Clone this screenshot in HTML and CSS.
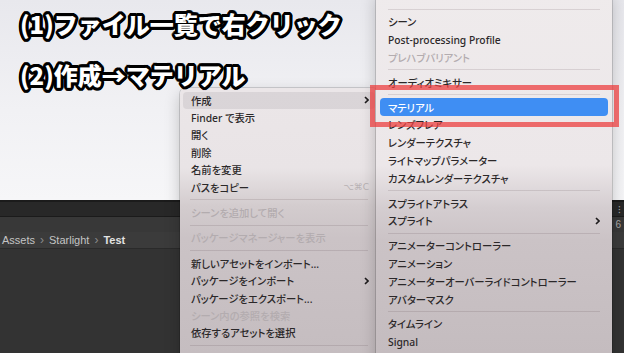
FILE: index.html
```html
<!DOCTYPE html>
<html lang="ja">
<head>
    <meta charset="UTF-8">
    <meta name="viewport" content="width=device-width, initial-scale=1.0">
    <title>作成 → マテリアル</title>
    <link rel="stylesheet" href="styles.css">
</head>
<body>

    <div class="screen">
        <section class="desk">
            <p class="note">(1)ファイル一覧で右クリック</p>
            <p class="note">(2)作成→マテリアル</p>
        </section>

        <section class="editor">
            <div class="toolbar"><span class="more">⁝</span></div>
            <div class="subbar"><span class="count">6</span></div>
            <div class="crumbs">
                <span>Assets</span><span class="crumb-sep">›</span>
                <span>Starlight</span><span class="crumb-sep">›</span>
                <b>Test</b>
            </div>
            <div class="files"></div>
        </section>

        <!-- 右クリックメニュー -->
        <div class="menu menu-main">
            <div class="item open">作成<svg class="arrow" viewBox="0 0 5 8"><path d="M1 1 L4 4 L1 7"/></svg></div>
            <div class="item">Finder で表示</div>
            <div class="item">開く</div>
            <div class="item">削除</div>
            <div class="item">名前を変更</div>
            <div class="item">パスをコピー<span class="keys">⌥⌘C</span></div>
            <div class="rule"></div>
            <div class="item off">シーンを追加して開く</div>
            <div class="rule"></div>
            <div class="item off">パッケージマネージャーを表示</div>
            <div class="rule"></div>
            <div class="item">新しいアセットをインポート...</div>
            <div class="item">パッケージをインポート<svg class="arrow" viewBox="0 0 5 8"><path d="M1 1 L4 4 L1 7"/></svg></div>
            <div class="item">パッケージをエクスポート...</div>
            <div class="item off">シーン内の参照を検索</div>
            <div class="item">依存するアセットを選択</div>
            <div class="rule"></div>
        </div>

        <!-- 作成サブメニュー -->
        <div class="menu menu-sub">
            <div class="rule"></div>
            <div class="item">シーン</div>
            <div class="item">Post-processing Profile</div>
            <div class="item off">プレハブバリアント</div>
            <div class="rule"></div>
            <div class="item">オーディオミキサー</div>
            <div class="rule"></div>
            <div class="item active">マテリアル</div>
            <div class="item">レンズフレア</div>
            <div class="item">レンダーテクスチャ</div>
            <div class="item">ライトマップパラメーター</div>
            <div class="item">カスタムレンダーテクスチャ</div>
            <div class="rule"></div>
            <div class="item">スプライトアトラス</div>
            <div class="item">スプライト<svg class="arrow" viewBox="0 0 5 8"><path d="M1 1 L4 4 L1 7"/></svg></div>
            <div class="rule"></div>
            <div class="item">アニメーターコントローラー</div>
            <div class="item">アニメーション</div>
            <div class="item">アニメーターオーバーライドコントローラー</div>
            <div class="item">アバターマスク</div>
            <div class="rule"></div>
            <div class="item">タイムライン</div>
            <div class="item">Signal</div>
        </div>

        <div class="focus-box"></div>
    </div>

</body>
</html>
```

FILE: styles.css
```css
:root {
    /* 全体 */
    --desk-top: #e8e8ed;
    --desk-bottom: #f6f6f8;
    --menu-text: #2b2829;
    --menu-off: #b3acaf;
    --menu-rule: rgba(60, 40, 50, 0.13);
    --accent: #3f8ef3;
    --mark: rgba(236, 62, 62, 0.74);

    /* エディタ */
    --ed-line: #1b1b1b;
    --ed-toolbar: #282828;
    --ed-row: #383838;
    --ed-crumbs: #3b3b3b;
    --ed-panel: #333333;
}

* { box-sizing: border-box; }

body {
    margin: 0;
    width: 624px;
    height: 353px;
    overflow: hidden;
    font-family: "Noto Sans", "Noto Sans CJK JP", sans-serif;
}

.screen {
    position: relative;
    width: 624px;
    height: 353px;
    display: grid;
    grid-template-rows: 200px 1fr;
    overflow: hidden;
}

/* --- 上の明るい部分と注釈 --- */
.desk {
    background: linear-gradient(180deg, var(--desk-top) 0%, #f1f1f4 55%, var(--desk-bottom) 100%);
    padding: 11px 0 0 20px;
    display: flex;
    flex-direction: column;
    gap: 25px;
}
.note {
    position: relative;
    z-index: 5;
    margin: 0;
    font-family: "Noto Sans CJK JP", sans-serif;
    font-weight: 900;
    font-size: 24px;
    line-height: 26px;
    color: #fff;
    text-shadow:
        3px 0 0 #000, 2.8px 1.2px 0 #000, 2.1px 2.1px 0 #000, 1.2px 2.8px 0 #000,
        0 3px 0 #000, -1.2px 2.8px 0 #000, -2.1px 2.1px 0 #000, -2.8px 1.2px 0 #000,
        -3px 0 0 #000, -2.8px -1.2px 0 #000, -2.1px -2.1px 0 #000, -1.2px -2.8px 0 #000,
        0 -3px 0 #000, 1.2px -2.8px 0 #000, 2.1px -2.1px 0 #000, 2.8px -1.2px 0 #000,
        0 0 2px #000;
}

/* --- Unity エディタ --- */
.editor {
    background: var(--ed-panel);
    border-top: 2px solid var(--ed-line);
    display: flex;
    flex-direction: column;
    color: #c4c4c4;
    font-family: "Liberation Sans", sans-serif;
}
.toolbar, .subbar {
    display: flex;
    justify-content: flex-end;
    align-items: center;
    padding-right: 3px;
    font-size: 10px;
    color: #a8a8a8;
}
.toolbar {
    height: 15px;
    background: var(--ed-toolbar);
    border-bottom: 1px solid var(--ed-line);
}
.subbar {
    height: 15px;
    background: var(--ed-row);
}
.crumbs {
    height: 17px;
    background: var(--ed-crumbs);
    border-bottom: 1px solid #2a2a2a;
    display: flex;
    align-items: center;
    gap: 5px;
    padding-left: 2px;
    font-size: 11px;
}
.crumbs b { color: #e2e2e2; }
.crumb-sep { color: #8a8a8a; font-size: 12px; }
.files { flex: 1; }

/* --- メニュー --- */
.menu {
    position: absolute;
    z-index: 2;
    display: flex;
    flex-direction: column;
    color: var(--menu-text);
    font-size: 10.3px;
    font-weight: 500;
    font-feature-settings: "palt";
    border-radius: 6px;
    box-shadow: 0 0 0 1px rgba(0, 0, 0, 0.14), 0 6px 16px rgba(0, 0, 0, 0.22);
}
.menu-main {
    --row: 17.4px;
    --rule: 8px;
    top: 88px;
    left: 180px;
    width: 198px;
    height: 290px;
    padding-top: 3.5px;
    background: linear-gradient(180deg, #ebe6e8 0, #e9e4e6 80px, #d3ccce 118px, #cbc3c6 150px, #c5bdc0 265px);
}
.menu-sub {
    --row: 17.8px;
    --rule: 7px;
    z-index: 3;
    top: -10px;
    left: 376px;
    width: 236px;
    height: 380px;
    padding-top: 16px;
    background: linear-gradient(180deg, #efebec 0, #ece7e9 175px, #d4cdd0 218px, #cbc3c6 250px, #c4bcbf 363px);
}
.item {
    height: var(--row);
    flex: none;
    display: flex;
    align-items: center;
    margin: 0 3px;
    padding: 0 6px 0 8px;
    border-radius: 4px;
    white-space: nowrap;
}
.menu-sub .item { margin: 0 4px; padding-right: 8px; }
.item.open { background: rgba(60, 40, 50, 0.09); }
.item.active { background: var(--accent); color: #fff; }
.item.off { color: var(--menu-off); }
.arrow {
    margin-left: auto;
    width: 5px;
    height: 8px;
    fill: none;
    stroke: #1e1c1d;
    stroke-width: 1.6;
}
.keys {
    margin-left: auto;
    font-family: "DejaVu Sans", sans-serif;
    font-size: 9px;
    color: #b7b1b3;
}
.rule {
    height: var(--rule);
    flex: none;
    display: flex;
    align-items: center;
    padding: 0 10px;
}
.menu-sub .rule { padding: 0 12px; }
.rule::after {
    content: '';
    flex: 1;
    height: 1px;
    background: var(--menu-rule);
}

/* 赤い囲み */
.focus-box {
    position: absolute;
    z-index: 4;
    left: 370px;
    top: 85px;
    width: 249px;
    height: 42px;
    border: 5px solid var(--mark);
}
```
